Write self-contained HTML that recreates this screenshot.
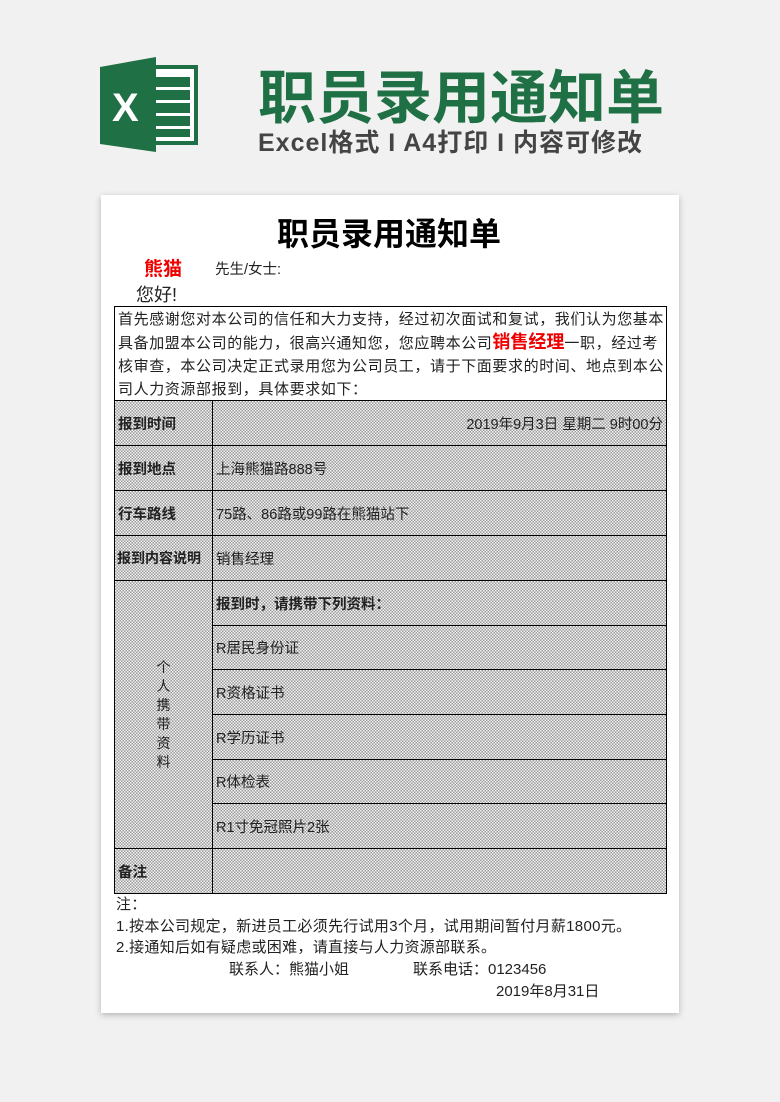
<!DOCTYPE html>
<html><head><meta charset="utf-8"><style>
body{margin:0;width:780px;height:1102px;background:#f1f1f1;position:relative;overflow:hidden;font-family:"Liberation Sans","Noto Sans CJK SC",sans-serif;}
.a{position:absolute;white-space:nowrap}
.paper{position:absolute;left:101px;top:195px;width:578px;height:818px;background:#fff;box-shadow:0 2px 6px rgba(0,0,0,.25)}
.dot{background-color:#d4d4d4;background-image:conic-gradient(#9a9a9a 25%,#f4f4f4 0 50%,#9a9a9a 0 75%,#f4f4f4 0);background-size:3px 3px}
.c{position:absolute;border:1px solid #000;box-sizing:border-box;font-size:14.5px;color:#222;display:flex;align-items:center;padding-left:3px}
.b{font-weight:bold}
</style></head><body>
<svg class="a" style="left:100px;top:57px" width="100" height="95" viewBox="0 0 100 95">
<rect x="45" y="10" width="51" height="76" fill="#fff" stroke="#1f7145" stroke-width="4"/>
<g fill="#1f7145"><rect x="56" y="20" width="34" height="10"/><rect x="56" y="33" width="34" height="10"/><rect x="56" y="46" width="34" height="10"/><rect x="56" y="59" width="34" height="10"/><rect x="56" y="72" width="34" height="8"/></g>
<path d="M0 10 L56 0 L56 95 L0 87 Z" fill="#1f7145"/>
<text x="12" y="64" font-size="40" font-weight="bold" fill="#fff" font-family="Liberation Sans">X</text>
</svg>
<div class="a" style="left:258px;top:51px;font-size:58px;font-weight:bold;color:#1f7145">职员录用通知单</div>
<div class="a" style="left:258px;top:123px;font-size:25px;font-weight:bold;color:#444;letter-spacing:1px">Excel格式 I A4打印 I 内容可修改</div>
<div class="paper"></div>
<div class="a" style="left:277px;top:209px;font-size:32px;font-weight:bold;color:#000">职员录用通知单</div>
<div class="a" style="left:144px;top:254px;font-size:19px;font-weight:bold;color:#e00">熊猫</div>
<div class="a" style="left:215px;top:258px;font-size:14.5px;color:#222">先生/女士:</div>
<div class="a" style="left:136px;top:281px;font-size:18px;color:#222">您好!</div>
<div class="c" style="left:114px;top:306px;width:553px;height:95px;display:block;padding:1px 2px 1px 3px;line-height:23px;font-size:15px;letter-spacing:0.6px;white-space:nowrap;overflow:hidden">首先感谢您对本公司的信任和大力支持，经过初次面试和复试，我们认为您基本<br>具备加盟本公司的能力，很高兴通知您，您应聘本公司<b style="color:#e00;font-size:18px;letter-spacing:0">销售经理</b>一职，经过考<br>核审查，本公司决定正式录用您为公司员工，请于下面要求的时间、地点到本公<br>司人力资源部报到，具体要求如下：</div>
<div class="c dot b" style="left:114px;top:400px;width:99px;height:46px">报到时间</div>
<div class="c dot" style="left:212px;top:400px;width:455px;height:46px;justify-content:flex-end;padding-right:3px">2019年9月3日 星期二 9时00分</div>
<div class="c dot b" style="left:114px;top:445px;width:99px;height:46px">报到地点</div>
<div class="c dot" style="left:212px;top:445px;width:455px;height:46px">上海熊猫路888号</div>
<div class="c dot b" style="left:114px;top:490px;width:99px;height:46px">行车路线</div>
<div class="c dot" style="left:212px;top:490px;width:455px;height:46px">75路、86路或99路在熊猫站下</div>
<div class="c dot b" style="left:114px;top:535px;width:99px;height:46px;padding-left:2px;font-size:14px">报到内容说明</div>
<div class="c dot" style="left:212px;top:535px;width:455px;height:46px">销售经理</div>
<div class="c dot" style="left:114px;top:580px;width:99px;height:269px;justify-content:center;padding:0;text-align:center;line-height:19px;font-size:14px;white-space:normal"><div style="width:15px">个人携带资料</div></div>
<div class="c dot b" style="left:212px;top:580px;width:455px;height:46px">报到时，请携带下列资料：</div>
<div class="c dot" style="left:212px;top:625px;width:455px;height:45px">R居民身份证</div>
<div class="c dot" style="left:212px;top:669px;width:455px;height:46px">R资格证书</div>
<div class="c dot" style="left:212px;top:714px;width:455px;height:46px">R学历证书</div>
<div class="c dot" style="left:212px;top:759px;width:455px;height:45px">R体检表</div>
<div class="c dot" style="left:212px;top:803px;width:455px;height:46px">R1寸免冠照片2张</div>
<div class="c dot b" style="left:114px;top:848px;width:99px;height:46px">备注</div>
<div class="c dot" style="left:212px;top:848px;width:455px;height:46px"></div>
<div class="a" style="left:116px;top:894px;font-size:15px;letter-spacing:.3px;color:#222;line-height:21.5px">注：<br>1.按本公司规定，新进员工必须先行试用3个月，试用期间暂付月薪1800元。<br>2.接通知后如有疑虑或困难，请直接与人力资源部联系。</div>
<div class="a" style="left:229px;top:958px;font-size:15px;color:#222">联系人：熊猫小姐</div>
<div class="a" style="left:413px;top:958px;font-size:15px;color:#222">联系电话：0123456</div>
<div class="a" style="left:496px;top:980px;font-size:15px;color:#222">2019年8月31日</div>
</body></html>
